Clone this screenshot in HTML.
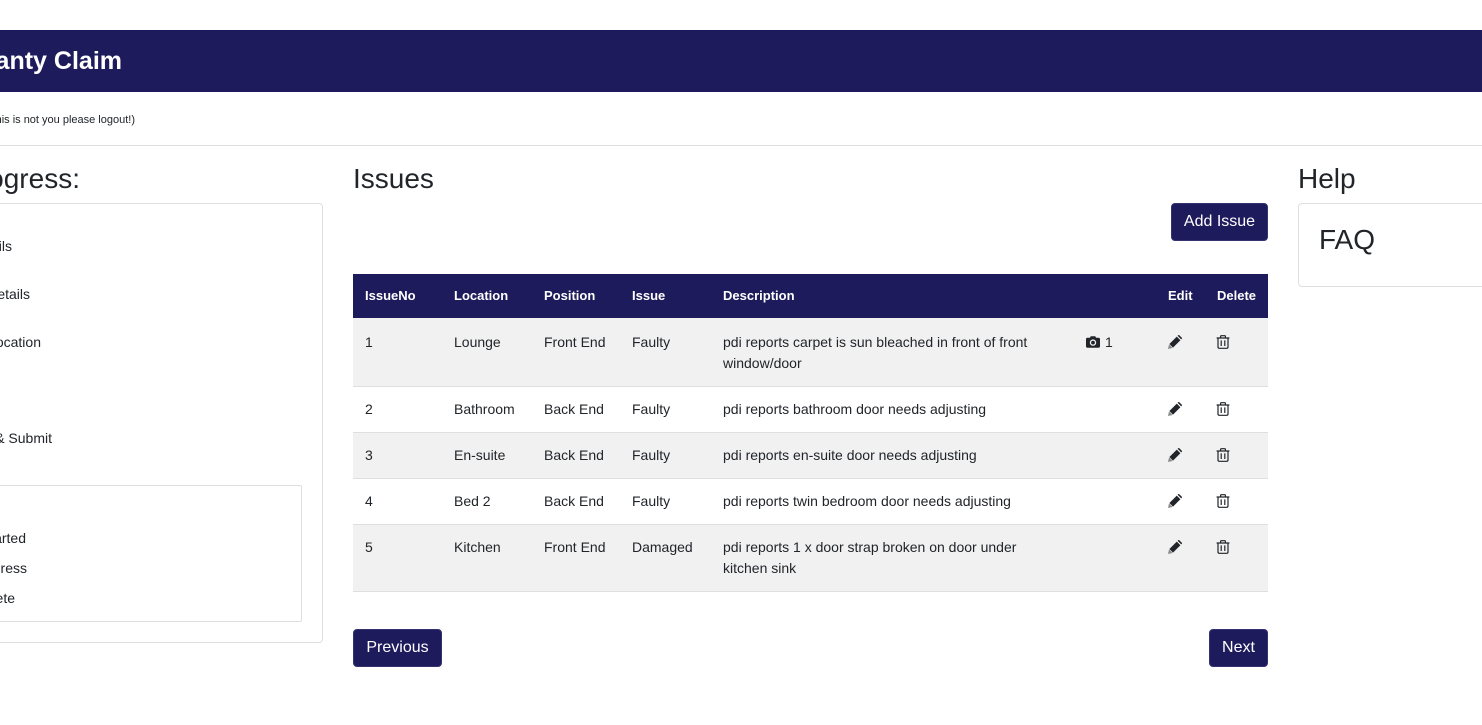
<!DOCTYPE html>
<html lang="en">
<head>
<meta charset="utf-8">
<title>Warranty Claim</title>
<style>
html,body{margin:0;padding:0;background:#fff;overflow:hidden;}
body{width:1482px;height:725px;font-family:"Liberation Sans",Arial,sans-serif;color:#212529;font-size:14px;}
#page{position:relative;width:1482px;height:725px;overflow:hidden;contain:paint;}
.a{position:absolute;white-space:nowrap;}
.r{position:absolute;white-space:nowrap;line-height:21px;}
.box{position:absolute;box-sizing:border-box;background:#fff;border:1px solid #dfdfdf;border-radius:4px;}
.band{position:absolute;left:353px;width:915px;}
.th{position:absolute;top:285px;line-height:21px;font-weight:bold;font-size:13px;color:#fff;white-space:nowrap;}
.td{position:absolute;line-height:21px;white-space:nowrap;}
.btn{position:absolute;box-sizing:border-box;height:38px;background:#1e1b5c;border:1px solid #34326f;border-radius:4px;color:#fff;font-size:16px;line-height:36px;text-align:center;}
h2{margin:0;font-weight:normal;font-size:28px;line-height:34px;position:absolute;white-space:nowrap;}
svg{position:absolute;display:block;}
</style>
</head>
<body>
<div id="page">
<div class="a" style="left:0;top:30px;width:1482px;height:62px;background:#1e1b5c;"></div>
<div class="a" style="right:1360px;top:46px;line-height:30px;font-size:25px;font-weight:bold;color:#fff;">Warranty Claim</div>
<div class="a" style="right:1347px;top:113px;line-height:14px;font-size:11px;color:#212529;">(If this is not you please logout!)</div>
<div class="a" style="left:0;top:145px;width:1482px;height:1px;background:#dfdfdf;"></div>

<h2 style="right:1402px;top:162px;">Claim Progress:</h2>
<h2 style="left:353px;top:162px;">Issues</h2>
<h2 style="left:1298px;top:162px;">Help</h2>

<div class="box" style="left:-40px;top:203px;width:363px;height:440px;"></div>
<div class="r" style="right:1470px;top:236px;">Details</div>
<div class="r" style="right:1452px;top:284px;">Details</div>
<div class="r" style="right:1441px;top:332px;">Location</div>
<div class="r" style="right:1430px;top:428px;">Review &amp; Submit</div>
<div class="box" style="left:-20px;top:485px;width:322px;height:137px;border-radius:2px;"></div>
<div class="r" style="right:1456px;top:528px;">Not Started</div>
<div class="r" style="right:1455px;top:558px;">In Progress</div>
<div class="r" style="right:1467px;top:588px;">Complete</div>

<div class="btn" style="left:1171px;top:203px;width:97px;">Add Issue</div>

<div class="box" style="left:1298px;top:203px;width:220px;height:84px;"></div>
<div class="a" style="left:1319px;top:223px;font-size:28px;line-height:34px;">FAQ</div>

<div class="band" style="top:274px;height:44px;background:#1e1b5c;"></div>
<div class="th" style="left:365px;">IssueNo</div>
<div class="th" style="left:454px;">Location</div>
<div class="th" style="left:544px;">Position</div>
<div class="th" style="left:632px;">Issue</div>
<div class="th" style="left:723px;">Description</div>
<div class="th" style="left:1168px;">Edit</div>
<div class="th" style="left:1217px;">Delete</div>

<div class="band" style="top:318px;height:68px;background:#f1f1f1;border-bottom:1px solid #dfdfdf;"></div>
<div class="band" style="top:387px;height:45px;background:#fff;border-bottom:1px solid #dfdfdf;"></div>
<div class="band" style="top:433px;height:45px;background:#f1f1f1;border-bottom:1px solid #dfdfdf;"></div>
<div class="band" style="top:479px;height:45px;background:#fff;border-bottom:1px solid #dfdfdf;"></div>
<div class="band" style="top:525px;height:66px;background:#f1f1f1;border-bottom:1px solid #dfdfdf;"></div>

<div class="td" style="left:365px;top:332px;">1</div>
<div class="td" style="left:454px;top:332px;">Lounge</div>
<div class="td" style="left:544px;top:332px;">Front End</div>
<div class="td" style="left:632px;top:332px;">Faulty</div>
<div class="td" style="left:723px;top:332px;">pdi reports carpet is sun bleached in front of front<br>window/door</div>
<div class="td" style="left:1105px;top:332px;">1</div>

<div class="td" style="left:365px;top:399px;">2</div>
<div class="td" style="left:454px;top:399px;">Bathroom</div>
<div class="td" style="left:544px;top:399px;">Back End</div>
<div class="td" style="left:632px;top:399px;">Faulty</div>
<div class="td" style="left:723px;top:399px;">pdi reports bathroom door needs adjusting</div>

<div class="td" style="left:365px;top:445px;">3</div>
<div class="td" style="left:454px;top:445px;">En-suite</div>
<div class="td" style="left:544px;top:445px;">Back End</div>
<div class="td" style="left:632px;top:445px;">Faulty</div>
<div class="td" style="left:723px;top:445px;">pdi reports en-suite door needs adjusting</div>

<div class="td" style="left:365px;top:491px;">4</div>
<div class="td" style="left:454px;top:491px;">Bed 2</div>
<div class="td" style="left:544px;top:491px;">Back End</div>
<div class="td" style="left:632px;top:491px;">Faulty</div>
<div class="td" style="left:723px;top:491px;">pdi reports twin bedroom door needs adjusting</div>

<div class="td" style="left:365px;top:537px;">5</div>
<div class="td" style="left:454px;top:537px;">Kitchen</div>
<div class="td" style="left:544px;top:537px;">Front End</div>
<div class="td" style="left:632px;top:537px;">Damaged</div>
<div class="td" style="left:723px;top:537px;">pdi reports 1 x door strap broken on door under<br>kitchen sink</div>

<svg style="left:1086px;top:335px;" width="14" height="14" viewBox="0 0 14 14"><path fill="#212529" fill-rule="evenodd" d="M1.3 2.8H4L4.7 1.3H9.3L10 2.8H12.7C13.4 2.8 14 3.4 14 4.1V11.4C14 12.1 13.4 12.7 12.7 12.7H1.3C.6 12.7 0 12.1 0 11.4V4.1C0 3.4 .6 2.8 1.3 2.8ZM7 4.4A3.2 3.2 0 1 0 7 10.8A3.2 3.2 0 1 0 7 4.4ZM7 5.7A1.9 1.9 0 1 1 7 9.5A1.9 1.9 0 1 1 7 5.7Z"/></svg>

<svg style="left:1168px;top:335px;" width="14" height="14" viewBox="0 0 14 14"><path fill="#8a8b8c" d="M0 14L1 9.4 4.6 13Z"/><path fill="#212529" d="M1.4 9L8.8 1.6 12.4 5.2 5 12.6ZM9.6.8L10.2.2C10.5-.1 11-.1 11.3.2L13.8 2.7C14.1 3 14.1 3.5 13.8 3.8L13.2 4.4Z"/></svg>
<svg style="left:1168px;top:402px;" width="14" height="14" viewBox="0 0 14 14"><path fill="#8a8b8c" d="M0 14L1 9.4 4.6 13Z"/><path fill="#212529" d="M1.4 9L8.8 1.6 12.4 5.2 5 12.6ZM9.6.8L10.2.2C10.5-.1 11-.1 11.3.2L13.8 2.7C14.1 3 14.1 3.5 13.8 3.8L13.2 4.4Z"/></svg>
<svg style="left:1168px;top:448px;" width="14" height="14" viewBox="0 0 14 14"><path fill="#8a8b8c" d="M0 14L1 9.4 4.6 13Z"/><path fill="#212529" d="M1.4 9L8.8 1.6 12.4 5.2 5 12.6ZM9.6.8L10.2.2C10.5-.1 11-.1 11.3.2L13.8 2.7C14.1 3 14.1 3.5 13.8 3.8L13.2 4.4Z"/></svg>
<svg style="left:1168px;top:494px;" width="14" height="14" viewBox="0 0 14 14"><path fill="#8a8b8c" d="M0 14L1 9.4 4.6 13Z"/><path fill="#212529" d="M1.4 9L8.8 1.6 12.4 5.2 5 12.6ZM9.6.8L10.2.2C10.5-.1 11-.1 11.3.2L13.8 2.7C14.1 3 14.1 3.5 13.8 3.8L13.2 4.4Z"/></svg>
<svg style="left:1168px;top:540px;" width="14" height="14" viewBox="0 0 14 14"><path fill="#8a8b8c" d="M0 14L1 9.4 4.6 13Z"/><path fill="#212529" d="M1.4 9L8.8 1.6 12.4 5.2 5 12.6ZM9.6.8L10.2.2C10.5-.1 11-.1 11.3.2L13.8 2.7C14.1 3 14.1 3.5 13.8 3.8L13.2 4.4Z"/></svg>

<svg style="left:1216px;top:335px;" width="14" height="14" viewBox="0 0 14 14"><path fill="none" stroke="#212529" stroke-width="1.2" d="M.6 3H13.4M4.6 3V1.4C4.6 1 4.9.7 5.2.7H8.8C9.1.7 9.4 1 9.4 1.4V3M2 3V12C2 12.8 2.6 13.3 3.3 13.3H10.7C11.4 13.3 12 12.8 12 12V3M5.2 5.4V11M8.8 5.4V11"/></svg>
<svg style="left:1216px;top:402px;" width="14" height="14" viewBox="0 0 14 14"><path fill="none" stroke="#212529" stroke-width="1.2" d="M.6 3H13.4M4.6 3V1.4C4.6 1 4.9.7 5.2.7H8.8C9.1.7 9.4 1 9.4 1.4V3M2 3V12C2 12.8 2.6 13.3 3.3 13.3H10.7C11.4 13.3 12 12.8 12 12V3M5.2 5.4V11M8.8 5.4V11"/></svg>
<svg style="left:1216px;top:448px;" width="14" height="14" viewBox="0 0 14 14"><path fill="none" stroke="#212529" stroke-width="1.2" d="M.6 3H13.4M4.6 3V1.4C4.6 1 4.9.7 5.2.7H8.8C9.1.7 9.4 1 9.4 1.4V3M2 3V12C2 12.8 2.6 13.3 3.3 13.3H10.7C11.4 13.3 12 12.8 12 12V3M5.2 5.4V11M8.8 5.4V11"/></svg>
<svg style="left:1216px;top:494px;" width="14" height="14" viewBox="0 0 14 14"><path fill="none" stroke="#212529" stroke-width="1.2" d="M.6 3H13.4M4.6 3V1.4C4.6 1 4.9.7 5.2.7H8.8C9.1.7 9.4 1 9.4 1.4V3M2 3V12C2 12.8 2.6 13.3 3.3 13.3H10.7C11.4 13.3 12 12.8 12 12V3M5.2 5.4V11M8.8 5.4V11"/></svg>
<svg style="left:1216px;top:540px;" width="14" height="14" viewBox="0 0 14 14"><path fill="none" stroke="#212529" stroke-width="1.2" d="M.6 3H13.4M4.6 3V1.4C4.6 1 4.9.7 5.2.7H8.8C9.1.7 9.4 1 9.4 1.4V3M2 3V12C2 12.8 2.6 13.3 3.3 13.3H10.7C11.4 13.3 12 12.8 12 12V3M5.2 5.4V11M8.8 5.4V11"/></svg>

<div class="btn" style="left:353px;top:629px;width:89px;">Previous</div>
<div class="btn" style="left:1209px;top:629px;width:59px;">Next</div>
</div>
</body>
</html>
